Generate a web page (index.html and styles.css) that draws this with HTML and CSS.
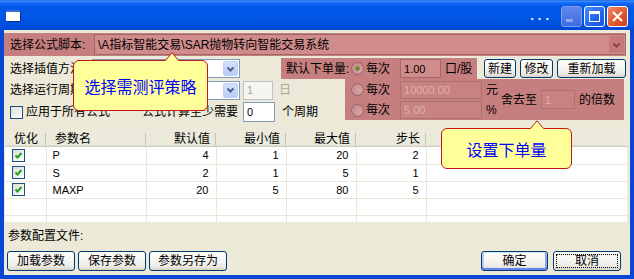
FILE: index.html
```html
<!DOCTYPE html>
<html lang="zh-CN">

<head>
	<meta charset="UTF-8" />
	<title>参数设置</title>
	<link rel="stylesheet" href="styles.css">
</head>

<body>
	<div class="window">
		<div class="titlebar">
			<span class="app-icon"></span>
			<span class="title-text">...</span>
			<span class="cap cap-min">
				<svg width="19" height="19"><rect x="4" y="12" width="7" height="3" fill="#8FA8E6" /></svg>
			</span>
			<span class="cap cap-max">
				<svg width="19" height="19">
					<rect x="4" y="4" width="11" height="3" fill="#fff" />
					<rect x="4.5" y="4.5" width="10" height="10" fill="none" stroke="#fff" />
				</svg>
			</span>
			<span class="cap cap-close">
				<svg width="19" height="19">
					<path d="M5 5 L14 14 M14 5 L5 14" stroke="#fff" stroke-width="2" />
				</svg>
			</span>
		</div>

		<div class="client">
			<div class="script-row">
				<span class="script-label">选择公式脚本:</span>
				<div class="script-combo">
					<span>\A指标智能交易\SAR抛物转向智能交易系统</span>
					<span class="pink-drop">
						<svg width="9" height="6"><polyline points="1.5,1.5 4.5,4.5 7.5,1.5" fill="none" stroke="#8A4545" stroke-width="2" /></svg>
					</span>
				</div>
			</div>

			<div class="settings">
				<div class="field set-a">
					<span class="field-label">选择插值方法:</span>
					<div class="combo"><span class="combo-btn"><svg width="9" height="6"><polyline points="1.5,1.5 4.5,4.5 7.5,1.5" fill="none" stroke="#4D6185" stroke-width="2" /></svg></span></div>
				</div>

				<div class="order-top">
					<div class="order-head">
						<span class="order-label">默认下单量:</span>
						<span class="radio-item"><span class="radio on"></span>每次</span>
						<span class="pink-edit lat">1.00</span>
						<span class="unit">口/股</span>
					</div>
					<button class="xp-btn btn-new">新建</button>
					<button class="xp-btn btn-edit">修改</button>
					<button class="xp-btn btn-reload">重新加载</button>
				</div>

				<div class="field set-b">
					<span class="field-label">选择运行周期:</span>
					<div class="combo"><span class="combo-btn"><svg width="9" height="6"><polyline points="1.5,1.5 4.5,4.5 7.5,1.5" fill="none" stroke="#4D6185" stroke-width="2" /></svg></span></div>
					<span class="edit off day-edit lat">1</span>
				</div>
				<div class="day">日</div>

				<div class="field set-c">
					<span class="check-label"><span class="box"></span>应用于所有公式</span>
					<span>公式计算至少需要</span>
					<span class="edit min-edit lat">0</span>
				</div>
				<div class="period">个周期</div>

				<div class="order-more">
					<div class="radio-col">
						<div class="radio-line">
							<span class="radio-item"><span class="radio"></span>每次</span>
							<span class="pink-edit wide off lat">10000.00</span>
							<span class="unit">元</span>
						</div>
						<div class="radio-line">
							<span class="radio-item"><span class="radio"></span>每次</span>
							<span class="pink-edit wide off lat">5.00</span>
							<span class="unit">%</span>
						</div>
					</div>
					<div class="round">
						<span>舍去至</span>
						<span class="pink-edit round-edit off lat">1</span>
						<span class="unit">的倍数</span>
					</div>
				</div>
			</div>

			<div class="list">
				<table>
					<colgroup>
						<col style="width:41px">
						<col style="width:100px">
						<col style="width:70px">
						<col style="width:70px">
						<col style="width:70px">
						<col style="width:70px">
						<col>
					</colgroup>
					<thead>
						<tr>
							<th>优化</th>
							<th>参数名</th>
							<th class="r">默认值</th>
							<th class="r">最小值</th>
							<th class="r">最大值</th>
							<th class="r">步长</th>
							<th class="last"></th>
						</tr>
					</thead>
					<tbody>
						<tr>
							<td class="chk-cell"><span class="chk"><svg width="11" height="11"><polyline points="2.5,5.5 4.5,7.5 8.5,3" fill="none" stroke="#21A121" stroke-width="2" /></svg></span></td>
							<td>P</td>
							<td class="r">4</td>
							<td class="r">1</td>
							<td class="r">20</td>
							<td class="r">2</td>
							<td></td>
						</tr>
						<tr>
							<td class="chk-cell"><span class="chk"><svg width="11" height="11"><polyline points="2.5,5.5 4.5,7.5 8.5,3" fill="none" stroke="#21A121" stroke-width="2" /></svg></span></td>
							<td>S</td>
							<td class="r">2</td>
							<td class="r">1</td>
							<td class="r">5</td>
							<td class="r">1</td>
							<td></td>
						</tr>
						<tr>
							<td class="chk-cell"><span class="chk"><svg width="11" height="11"><polyline points="2.5,5.5 4.5,7.5 8.5,3" fill="none" stroke="#21A121" stroke-width="2" /></svg></span></td>
							<td>MAXP</td>
							<td class="r">20</td>
							<td class="r">5</td>
							<td class="r">80</td>
							<td class="r">5</td>
							<td></td>
						</tr>
						<tr>
							<td></td><td></td><td></td><td></td><td></td><td></td><td></td>
						</tr>
						<tr>
							<td></td><td></td><td></td><td></td><td></td><td></td><td></td>
						</tr>
					</tbody>
				</table>
			</div>

			<div class="config-label">参数配置文件:</div>

			<div class="bottom-bar">
				<button class="xp-btn b-load">加载参数</button>
				<button class="xp-btn b-save">保存参数</button>
				<button class="xp-btn b-saveas">参数另存为</button>
				<button class="xp-btn b-ok">确定</button>
				<button class="xp-btn b-cancel">取消</button>
			</div>

			<div class="tip tip-strategy">
				<svg class="tip-arrow" width="14" height="9"><polygon points="0,9 7,0.5 14,9" fill="#FFFF99" /><polyline points="0.5,8.5 7,0.8 13.5,8.5" fill="none" stroke="#C01818" /></svg>
				选择需测评策略
			</div>
			<div class="tip tip-order">
				<svg class="tip-arrow" width="14" height="9"><polygon points="0,9 7,0.5 14,9" fill="#FFFF99" /><polyline points="0.5,8.5 7,0.8 13.5,8.5" fill="none" stroke="#C01818" /></svg>
				设置下单量
			</div>
		</div>
	</div>
</body>

</html>
```

FILE: styles.css
```css
* {
	box-sizing: border-box;
}

body {
	margin: 0;
	font-family: "Liberation Sans", "Noto Sans CJK SC", sans-serif;
	font-size: 12px;
	line-height: 14px;
	color: #000;
}

.lat {
	font-size: 11px;
}

.window {
	width: 634px;
	height: 279px;
	display: flex;
	flex-direction: column;
	background: #0846D6;
	overflow: hidden;
}

/* title bar */
.titlebar {
	flex: none;
	height: 30px;
	display: flex;
	align-items: center;
	padding: 0 6px;
	background: linear-gradient(#0B5CE6 0, #3D8FFC 1px, #1468F5 3px, #0058E8 7px, #0055E4 20px, #004AD9 29px, #0044D0 30px);
}

.app-icon {
	width: 14px;
	height: 11px;
	margin: 1px 0 0 0;
	background: #fff;
	border-top: 2px solid #3A6FD8;
	box-shadow: 1px 1px 0 #0A2E8C;
}

.title-text {
	margin: 0 6px 0 auto;
	color: #fff;
	font-weight: bold;
	font-size: 13px;
	letter-spacing: 4px;
	margin-top: 1px;
}

.cap {
	width: 21px;
	height: 21px;
	margin: 3px 0 0 2px;
	border: 1px solid #fff;
	border-radius: 3px;
	display: flex;
}

.cap-min {
	border-color: #7E9DEB;
	background: linear-gradient(#5F87EC, #3E6BE0);
}

.cap-max {
	background: linear-gradient(135deg, #4C8DFB, #2264F0 60%, #1A52DE);
}

.cap-close {
	background: linear-gradient(135deg, #EE8B68, #E0592F 55%, #C9401A);
}

/* client area */
.client {
	flex: 1;
	margin: 0 4px 4px;
	background: #ECE9D8;
	position: relative;
	display: flex;
	flex-direction: column;
}

.script-row {
	flex: none;
	height: 23px;
	margin: 3px 4px 0 0;
	padding-left: 6px;
	background: #C67F7F;
	display: flex;
	align-items: center;
}

.script-label {
	width: 84px;
	flex: none;
}

.script-combo {
	flex: 1;
	align-self: stretch;
	margin: 1px 0;
	padding-left: 3px;
	border: 1px solid #A46565;
	background: #D08B8B;
	display: flex;
	align-items: center;
}

.pink-drop {
	margin-left: auto;
	margin-right: 1px;
	width: 15px;
	height: 17px;
	border-radius: 2px;
	background: #C47A7A;
	display: flex;
	align-items: center;
	justify-content: center;
}

/* settings block */
.settings {
	flex: none;
	display: grid;
	grid-template-columns: 273px 68px 281px;
	grid-template-rows: 21px 22px 22px;
	margin-top: 2px;
}

.field {
	display: flex;
	align-items: center;
}

.set-a {
	grid-column: 1;
	grid-row: 1;
}

.set-b {
	grid-column: 1;
	grid-row: 2;
}

.set-c {
	grid-column: 1;
	grid-row: 3;
}

.field-label {
	width: 88px;
	padding-left: 6px;
	flex: none;
	white-space: nowrap;
	overflow: hidden;
}

.combo {
	width: 148px;
	height: 19px;
	padding: 1px;
	border: 1px solid #7F9DB9;
	background: #fff;
	display: flex;
	justify-content: flex-end;
}

.combo-btn {
	width: 15px;
	border-radius: 2px;
	border: 1px solid #BCD0FA;
	background: linear-gradient(#D4E1FD, #B9CCF8);
	display: flex;
	align-items: center;
	justify-content: center;
}

.edit {
	height: 19px;
	padding: 0 3px;
	border: 1px solid #7F9DB9;
	background: #fff;
	display: flex;
	align-items: center;
}

.edit.off {
	border-color: #B8C2CF;
	background: #F5F4EF;
	color: #ACA899;
}

.day-edit {
	width: 30px;
	margin-left: 3px;
}

.day {
	grid-column: 2;
	grid-row: 2;
	padding-left: 2px;
	align-self: center;
	color: #ACA899;
}

.check-label {
	width: 138px;
	padding-left: 6px;
	display: flex;
	align-items: center;
	gap: 3px;
}

.box {
	width: 13px;
	height: 13px;
	border: 1px solid #1C5180;
	background: linear-gradient(135deg, #DCDCD7, #fff);
}

.min-edit {
	width: 32px;
	height: 20px;
	margin-left: 5px;
}

.period {
	grid-column: 2;
	grid-row: 3;
	padding-left: 5px;
	align-self: center;
}

/* order amount */
.order-top {
	grid-column: 2 / 4;
	grid-row: 1;
	display: flex;
	align-items: center;
	padding-left: 4px;
}

.order-head {
	width: 196px;
	height: 21px;
	background: #C67F7F;
	display: flex;
	align-items: center;
}

.order-label {
	width: 64px;
	padding-left: 5px;
	flex: none;
	white-space: nowrap;
}

.radio-item {
	display: flex;
	align-items: center;
	gap: 2px;
	margin-left: 6px;
}

.order-head .radio-item {
	margin-left: 2px;
}

.order-label {
	width: 68px;
}

.radio-line .radio-item {
	margin-left: 0;
}

.radio {
	width: 13px;
	height: 13px;
	border-radius: 50%;
	border: 1px solid #96607A;
	background: radial-gradient(circle at 65% 65%, #D9A2A2, #C58585);
}

.radio.on {
	background: radial-gradient(circle, #6E8A35 0 2px, transparent 2.6px), radial-gradient(circle at 65% 65%, #D9A2A2, #C58585);
}

.pink-edit {
	width: 41px;
	height: 19px;
	margin-left: 10px;
	padding-left: 3px;
	border: 1px solid #A66868;
	background: #D08B8B;
	display: flex;
	align-items: center;
}

.pink-edit.off {
	background: #C98282;
	border-color: #AB7070;
	color: #DDB0AC;
}

.pink-edit.wide {
	width: 82px;
	height: 18px;
}

.unit {
	margin-left: 4px;
}

.order-more {
	grid-column: 3;
	grid-row: 2 / 4;
	align-self: start;
	width: 279px;
	height: 41px;
	background: #C67F7F;
	display: flex;
}

.radio-col {
	width: 154px;
	padding-left: 6px;
	display: flex;
	flex-direction: column;
}

.radio-line {
	height: 21px;
	display: flex;
	align-items: center;
}

.radio-line + .radio-line {
	height: 20px;
}

.round {
	margin-left: 2px;
	display: flex;
	align-items: center;
}

.round-edit {
	width: 34px;
	margin-left: 4px;
}

/* buttons */
.xp-btn {
	height: 20px;
	padding: 0;
	border: 1px solid #003C74;
	border-radius: 3px;
	background: linear-gradient(#FFFFFF, #F5F5F1 45%, #ECEBE6 80%, #D8D2C6);
	font: inherit;
	color: #000;
	display: flex;
	align-items: center;
	justify-content: center;
}

.order-top .xp-btn {
	height: 19px;
}

.btn-new {
	width: 32px;
	margin-left: 7px;
}

.btn-edit {
	width: 33px;
	margin-left: 4px;
}

.btn-reload {
	width: 69px;
	margin-left: 4px;
}

/* parameter list */
.list {
	flex: none;
	width: 623px;
	height: 92px;
	margin: 7px 0 0 1px;
	background: #fff;
	overflow: hidden;
}

.list table {
	width: 100%;
	border-collapse: collapse;
	table-layout: fixed;
}

.list th {
	height: 17px;
	padding: 0 6px 0 9px;
	font-weight: normal;
	text-align: left;
	white-space: nowrap;
	background: linear-gradient(#C7C5B2, #C7C5B2) right 0 top 3px / 1px 12px no-repeat, #EBEADB;
	box-shadow: inset 0 -1px #D0CCBB, inset 0 -2px #E2DFD2;
}

.list th.last {
	background: #EBEADB;
}

.list th.r,
.list td.r {
	text-align: right;
}

.list td {
	height: 17px;
	padding: 0 7px 0 6px;
	font-size: 11px;
	border-right: 1px solid #EAE7DA;
	border-bottom: 1px solid #EAE7DA;
}

.list td.chk-cell {
	padding-left: 7px;
}

.chk {
	display: block;
	width: 13px;
	height: 13px;
	border: 1px solid #1C5180;
	background: linear-gradient(135deg, #DCDCD7, #fff);
}

.chk svg {
	display: block;
}

/* footer */
.config-label {
	margin: 7px 0 0 4px;
}

.bottom-bar {
	margin-top: auto;
	margin-bottom: 4px;
	padding: 0 9px 0 3px;
	display: flex;
	gap: 3px;
}

.b-load,
.b-save {
	width: 68px;
}

.b-saveas {
	width: 78px;
}

.b-ok {
	width: 67px;
	margin-left: auto;
	box-shadow: inset 0 1px #CEE7FF, inset 0 -2px #6982EE, inset 2px 0 #B8CCF5, inset -2px 0 #8DA6EE;
}

.b-cancel {
	width: 68px;
	margin-left: 2px;
	outline: 1px dotted #000;
	outline-offset: -4px;
}

/* balloon tips */
.tip {
	position: absolute;
	background: #FFFF99;
	border: 1px solid #C01818;
	border-radius: 6px;
	color: #0000FF;
	font-family: "Noto Sans CJK SC", sans-serif;
	font-size: 16px;
	line-height: 20px;
	display: flex;
	align-items: center;
	justify-content: center;
}

.tip-arrow {
	position: absolute;
	top: -9px;
}

.tip-strategy {
	left: 69px;
	top: 30px;
	width: 135px;
	height: 51px;
}

.tip-strategy .tip-arrow {
	left: 91px;
}

.tip-order {
	left: 437px;
	top: 98px;
	width: 131px;
	height: 41px;
}

.tip-order .tip-arrow {
	left: 88px;
}
```
